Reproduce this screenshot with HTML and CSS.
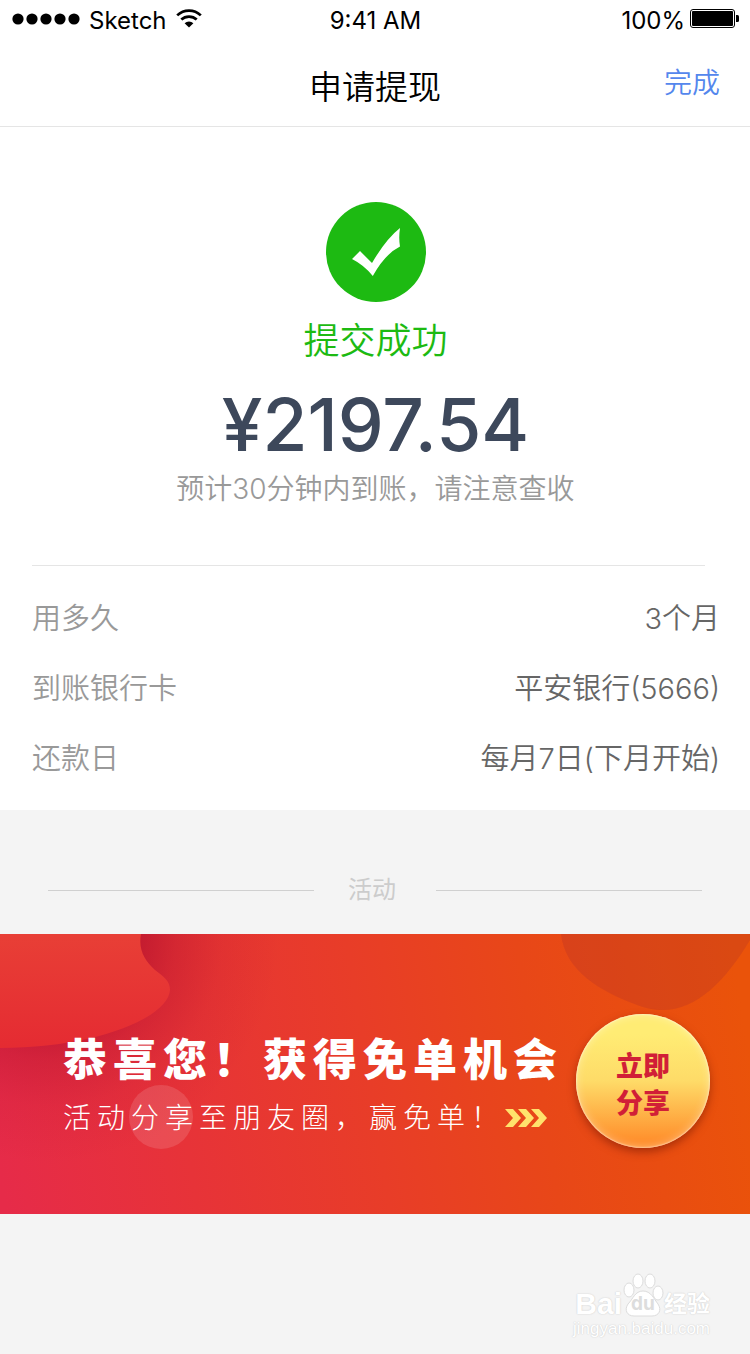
FILE: index.html
```
<!DOCTYPE html>
<html lang="zh-CN">

<head>
  <meta charset="UTF-8">
  <meta name="viewport" content="width=device-width, initial-scale=1.0">
  <title>申请提现</title>
  <link rel="stylesheet" href="styles.css">
</head>

<body>
  <div class="status">
    <div class="status-l">
      <svg class="signal" width="68" height="12" viewBox="0 0 68 12">
        <circle cx="6" cy="6" r="5.6" />
        <circle cx="20" cy="6" r="5.6" />
        <circle cx="34" cy="6" r="5.6" />
        <circle cx="48" cy="6" r="5.6" />
        <circle cx="62" cy="6" r="5.6" />
      </svg>
      <span>Sketch</span>
      <svg class="wifi" width="26" height="19" viewBox="0 0 26 19">
        <path d="M1.2 6.4a17 17 0 0 1 23.6 0M5.3 10.6a11.2 11.2 0 0 1 15.4 0" fill="none" stroke="#000" stroke-width="2.7" />
        <path d="M8.6 14.2a6.4 6.4 0 0 1 8.8 0L13 18.4z" />
      </svg>
    </div>
    <div class="status-c">9:41 AM</div>
    <div class="status-r">
      <span>100%</span>
      <svg class="battery" width="49" height="19" viewBox="0 0 49 19">
        <rect x="0.5" y="0.5" width="44" height="18" rx="2.5" fill="none" stroke="#000" />
        <rect x="2" y="2" width="41" height="15" rx="1" />
        <path d="M46 6h1.500q1.500 0 1.500 1.500v4q0 1.500-1.500 1.500H46z" />
      </svg>
    </div>
  </div>

  <header class="nav">
    <h1>申请提现</h1>
    <a class="done" href="#">完成</a>
  </header>

  <main>
    <section class="result">
      <svg class="tick" width="100" height="100" viewBox="0 0 100 100">
        <circle cx="50" cy="50" r="50" fill="#1dba12" />
        <path d="M26 57L34 49L46 61Q60 37 74 26Q72.500 36 74 44.500Q59 52 46.800 74Q38 63 26 57z" fill="#fff" />
      </svg>
      <p class="result-title">提交成功</p>
      <p class="amount">¥2197.54</p>
      <p class="tip">预计30分钟内到账，请注意查收</p>
    </section>

    <dl class="detail">
      <div class="row">
        <dt>用多久</dt>
        <dd>3个月</dd>
      </div>
      <div class="row">
        <dt>到账银行卡</dt>
        <dd>平安银行(5666)</dd>
      </div>
      <div class="row">
        <dt>还款日</dt>
        <dd>每月7日(下月开始)</dd>
      </div>
    </dl>
  </main>

  <h2 class="activity">活动</h2>

  <section class="banner">
    <svg class="banner-bg" viewBox="0 0 750 280" preserveAspectRatio="xMidYMid slice">
      <defs>
        <linearGradient id="base" gradientUnits="userSpaceOnUse" x1="0" y1="240" x2="750" y2="120">
          <stop offset="0" stop-color="#e62b49" />
          <stop offset="0.25" stop-color="#e73338" />
          <stop offset="0.5" stop-color="#e83d28" />
          <stop offset="0.72" stop-color="#e84718" />
          <stop offset="1" stop-color="#ea530a" />
        </linearGradient>
        <linearGradient id="blob" x1="0" y1="0" x2="0" y2="1">
          <stop offset="0" stop-color="#e83f36" />
          <stop offset="1" stop-color="#e52b32" />
        </linearGradient>
        <radialGradient id="shade" gradientUnits="userSpaceOnUse" cx="50" cy="0" r="230">
          <stop offset="0.4" stop-color="#a80a28" stop-opacity="0.54" />
          <stop offset="0.55" stop-color="#a80a28" stop-opacity="0.3" />
          <stop offset="0.75" stop-color="#a80a28" stop-opacity="0.1" />
          <stop offset="1" stop-color="#a80a28" stop-opacity="0" />
        </radialGradient>
      </defs>
      <rect width="750" height="280" fill="url(#base)" />
      <rect width="300" height="280" fill="url(#shade)" />
      <path d="M0 0H141C138 16 145 27 155 36C164 43 170 47 170 56C168 84 95 114 0 114z" fill="url(#blob)" />
      <path d="M561 0C565 37 600 57 637 71C684 89 720 56 750 6V0z" fill="#a82a30" opacity="0.24" />
      <circle cx="161" cy="183" r="32" fill="#fff" opacity="0.13" />
    </svg>
    <div class="banner-text">
      <h3>恭喜您！获得免单机会</h3>
      <p>活动分享至朋友圈，赢免单！
        <svg class="arrows" width="42" height="18" viewBox="0 0 42 18">
          <path d="M0 0h8l8 9-8 9H0l8-9zM13 0h8l8 9-8 9h-8l8-9zM26 0h8l8 9-8 9h-8l8-9z" fill="#ffe26c" />
        </svg>
      </p>
    </div>
    <button class="share" type="button">立即<br>分享</button>
  </section>

  <footer class="mark">
    <div class="mark-logo">
      <span class="mark-bai">Bai</span>
      <span class="mark-paw">
        <svg width="42" height="44" viewBox="0 0 42 44">
          <g fill="#fff" stroke="#dcdcdc">
            <ellipse cx="7" cy="17" rx="5" ry="7" />
            <ellipse cx="16" cy="8" rx="5" ry="7" />
            <ellipse cx="28" cy="8" rx="5" ry="7" />
            <ellipse cx="36" cy="20" rx="5" ry="7" />
            <path d="M21 18C29 18 32 26 36 31C40 37 37 43 30 43H12C5 43 2 37 6 31C11 26 13 18 21 18z" />
          </g>
        </svg>
        <span class="mark-du">du</span>
      </span>
      <span class="mark-cn">经验</span>
    </div>
    <div class="mark-url">jingyan.baidu.com</div>
  </footer>
</body>

</html>
```
FILE: styles.css
```
* {
  padding: 0;
  margin: 0;
  box-sizing: border-box;
}

body {
  background-color: #f4f4f4;
  font-family: Inter, "Noto Sans CJK SC", sans-serif;
  font-weight: 350;
  color: #000;
}

svg {
  display: block;
  flex: none;
}

/* 状态栏 */
.status {
  display: grid;
  grid-template-columns: 1fr auto 1fr;
  align-items: center;
  height: 40px;
  padding: 0 11px 0 12px;
  background-color: #fff;
  font-size: 24px;
  font-weight: 400;
  line-height: 42px;
}

.status-l,
.status-r {
  display: flex;
  align-items: center;
}

.status-l {
  gap: 9px;
}

.status-r {
  justify-content: flex-end;
  gap: 5px;
}

.signal,
.wifi,
.battery {
  margin-bottom: 5px;
}

/* 导航 */
.nav {
  display: grid;
  grid-template-columns: 1fr auto 1fr;
  height: 87px;
  padding: 0 30px;
  border-bottom: 1px solid #e5e5e5;
  background-color: #fff;
}

.nav h1 {
  grid-column: 2;
  font-size: 33px;
  font-weight: 350;
  line-height: 94px;
}

.done {
  justify-self: end;
  color: #5487ed;
  font-size: 28px;
  line-height: 86px;
  text-decoration: none;
}

main {
  padding-bottom: 16px;
  background-color: #fff;
}

/* 提交结果 */
.result {
  display: flex;
  flex-direction: column;
  align-items: center;
  margin: 0 31px 0 32px;
  padding: 75px 0 55px;
  text-align: center;
}

.result-title {
  margin-top: 13px;
  color: #1dba12;
  font-size: 36px;
  line-height: 52px;
}

.amount {
  margin-top: 15px;
  color: #3d485b;
  font-size: 73px;
  font-weight: 500;
  line-height: 86px;
}

.tip {
  color: #999;
  font-size: 28px;
  line-height: 42px;
}

.detail {
  padding: 18px 30px 0 32px;
}

.detail::before {
  content: "";
  display: block;
  height: 1px;
  margin: -18px 15px 18px 0;
  background-color: #e5e5e5;
}

.row {
  display: flex;
  justify-content: space-between;
  font-size: 29px;
  line-height: 70px;
}

.row dt {
  color: #999;
}

.row dd {
  color: #666;
}

/* 活动 */
.activity {
  display: flex;
  align-items: center;
  gap: 34px;
  padding: 60px 48px 24px;
  color: #ccc;
  font-size: 24px;
  font-weight: 400;
  line-height: 40px;
}

.activity::before,
.activity::after {
  content: "";
  flex: 1;
  height: 1px;
  background-color: #d0d0d0;
}

.activity::after {
  margin-left: 6px;
}

.banner {
  position: relative;
  display: flex;
  align-items: center;
  justify-content: space-between;
  min-height: 280px;
  padding: 14px 40px 0 63px;
  overflow: hidden;
}

.banner-bg {
  position: absolute;
  top: 0;
  left: 0;
  width: 100%;
  height: 100%;
}

.banner-text {
  position: relative;
  padding-top: 14px;
  color: #fff;
  white-space: nowrap;
}

.banner h3 {
  font-size: 44px;
  font-weight: 900;
  letter-spacing: 6px;
  line-height: 60px;
}

.banner p {
  display: flex;
  align-items: center;
  font-size: 28px;
  font-weight: 300;
  letter-spacing: 6px;
  line-height: 56px;
}

.share {
  position: relative;
  flex: none;
  width: 134px;
  height: 134px;
  padding-top: 8px;
  border: 0;
  border-radius: 50%;
  background: linear-gradient(#ffec74 15%, #fedb68 50%, #ff8f2c 95%);
  box-shadow: 0 4px 8px rgba(110, 20, 0, 0.5), inset 0 0 10px rgba(255, 255, 255, 0.4), inset 0 0 2px #fff;
  color: #d11f37;
  font-family: inherit;
  font-size: 27px;
  font-weight: 900;
  line-height: 37px;
  cursor: pointer;
}

/* 水印 */
.mark {
  display: flex;
  flex-direction: column;
  align-items: flex-end;
  padding: 59px 40px 14px;
  color: #fff;
  text-shadow: 0 0 1px #ccc, 0 0 2px #ddd;
}

.mark-logo {
  display: flex;
  align-items: flex-end;
  height: 44px;
  line-height: 26px;
}

.mark-bai {
  font-family: "Liberation Sans", sans-serif;
  font-size: 30px;
  font-weight: 700;
}

.mark-paw {
  position: relative;
}

.mark-du {
  position: absolute;
  right: 0;
  bottom: 0;
  left: 0;
  color: #ddd;
  font-size: 19px;
  font-weight: 700;
  text-align: center;
  text-shadow: none;
}

.mark-cn {
  font-size: 23px;
  font-weight: 700;
}

.mark-url {
  font-family: "Liberation Sans", sans-serif;
  font-size: 17px;
  font-weight: 400;
  line-height: 23px;
}
```
